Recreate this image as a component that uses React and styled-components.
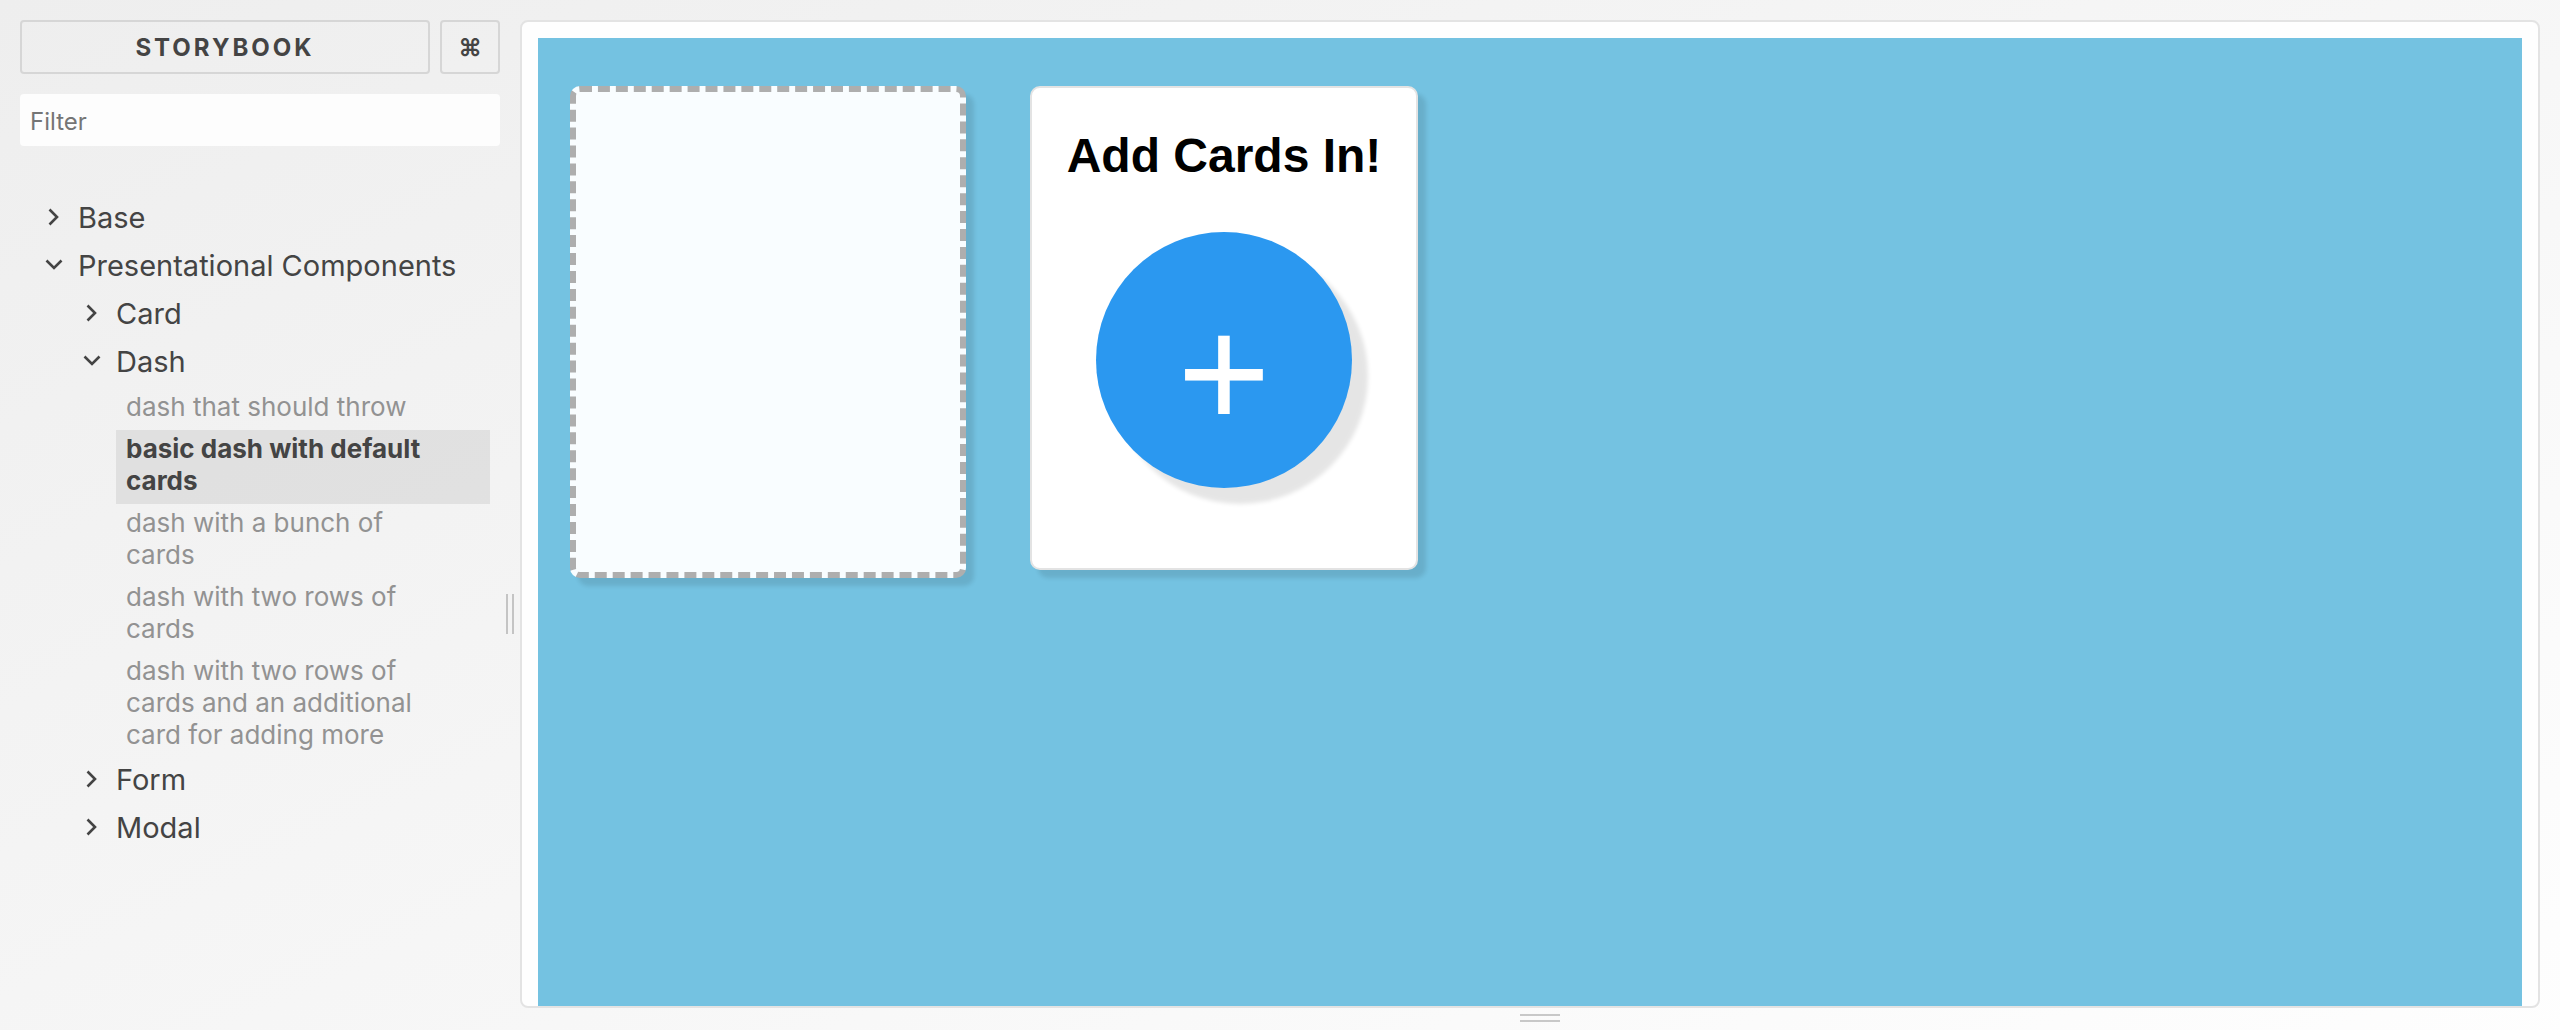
import React, { useState } from "react";
import styled, { createGlobalStyle, css } from "styled-components";

const GlobalStyle = createGlobalStyle`
  *, *::before, *::after { box-sizing: border-box; }
  body { margin: 0; }
`;

const uiFont = css`
  font-family: Inter, "Liberation Sans", sans-serif;
`;

const Page = styled.div`
  ${uiFont}
  display: flex;
  min-height: 100vh;
  color: #444;
  background: linear-gradient(to bottom right, #eee, #fff) 0 0 / 100% 118% no-repeat;
`;

const Sidebar = styled.aside`
  flex: 0 0 500px;
  padding: 20px 0 20px 20px;
`;

const Header = styled.header`
  display: flex;
  gap: 10px;
  margin-bottom: 20px;
`;

const HeaderButton = styled.button`
  ${uiFont}
  flex: ${(p) => (p.$grow ? "1" : "0 0 60px")};
  height: 54px;
  padding: 0;
  border: 2px solid #d6d6d6;
  border-radius: 4px;
  background: transparent;
  color: #444;
  font-size: 24px;
  font-weight: 700;
  letter-spacing: ${(p) => (p.$grow ? "3px" : "normal")};
  text-transform: uppercase;
  cursor: pointer;
`;

const FilterInput = styled.input`
  ${uiFont}
  display: block;
  width: 100%;
  height: 52px;
  padding: 2px 10px 0;
  border: 0;
  border-radius: 4px;
  background: #fdfdfd;
  color: #444;
  font-size: 24px;
  &::placeholder { color: #757575; opacity: 1; }
`;

const Tree = styled.nav`
  padding: 50px 10px 0 20px;
`;

const List = styled.ul`
  margin: 0;
  padding: 0 0 0 ${(p) => p.$indent}px;
  list-style: none;
`;

const NodeButton = styled.button`
  ${uiFont}
  display: flex;
  align-items: center;
  gap: 10px;
  width: 100%;
  height: 48px;
  padding: 0 0 6px;
  border: 0;
  background: transparent;
  color: #444;
  font-size: 29px;
  text-align: left;
  white-space: nowrap;
  cursor: pointer;
`;

const Arrow = styled.svg`
  flex: none;
  width: 28px;
  height: 28px;
  fill: none;
  stroke: currentColor;
  stroke-width: 2.6;
  transform: rotate(${(p) => (p.$open ? 90 : 0)}deg);
`;

const StoryLink = styled.a`
  display: block;
  padding: 3px 56px 7px 10px;
  background: ${(p) => (p.$active ? "rgba(0, 0, 0, 0.07)" : "transparent")};
  color: ${(p) => (p.$active ? "#444" : "#929292")};
  font-size: 26px;
  font-weight: ${(p) => (p.$active ? 700 : 400)};
  line-height: 32px;
  text-decoration: none;
`;

const SideHandle = styled.div`
  flex: 0 0 20px;
  display: flex;
  align-items: center;
  justify-content: center;
  padding-top: 198px;
  cursor: col-resize;
  &::before {
    content: "";
    width: 8px;
    height: 40px;
    border: solid #c4c4c4;
    border-width: 0 2px;
  }
`;

const Main = styled.main`
  flex: 1;
  min-width: 0;
  display: flex;
  flex-direction: column;
  padding-top: 20px;
`;

const Preview = styled.section`
  flex: 1;
  display: flex;
  margin-right: 20px;
  padding: 16px 16px 0;
  border: 2px solid #e3e3e3;
  border-radius: 8px;
  background: #fefefe;
`;

const BottomHandle = styled.div`
  display: flex;
  align-items: center;
  justify-content: center;
  height: 22px;
  padding-bottom: 2px;
  cursor: row-resize;
  &::before {
    content: "";
    width: 40px;
    height: 8px;
    border: solid #c8c8c8;
    border-width: 2px 0;
  }
`;

const Dash = styled.div`
  flex: 1;
  display: flex;
  flex-wrap: wrap;
  align-items: flex-start;
  align-content: flex-start;
  gap: 64px;
  padding: 48px 32px;
  background: #74c2e1;
`;

const CardBase = styled.article`
  border-radius: 10px;
  box-shadow: 8px 8px 4px rgba(0, 0, 0, 0.1);
`;

const EmptyCard = styled(CardBase)`
  width: 396px;
  height: 492px;
  border: 6px dashed #aeaeae;
  background: #f9fdff;
`;

const AddCard = styled(CardBase)`
  display: flex;
  flex-direction: column;
  align-items: center;
  gap: 48px;
  width: 388px;
  height: 484px;
  padding-top: 40px;
  border: 2px solid #e3e3e3;
  background: #fff;
`;

const CardTitle = styled.h2`
  margin: 0;
  color: #000;
  font: 700 48px/56px "Liberation Sans", Arial, sans-serif;
  white-space: nowrap;
`;

const AddButton = styled.button`
  width: 256px;
  height: 256px;
  padding: 26px 0 0;
  border: 0;
  border-radius: 50%;
  background: #2b98f0;
  box-shadow: 16px 16px 4px rgba(0, 0, 0, 0.1);
  color: #fff;
  font: 400 160px/230px "Liberation Sans", Arial, sans-serif;
  cursor: pointer;
`;

const components = [
  { name: "Card", stories: [] },
  {
    name: "Dash",
    stories: [
      "dash that should throw",
      "basic dash with default cards",
      "dash with a bunch of cards",
      "dash with two rows of cards",
      "dash with two rows of cards and an additional card for adding more",
    ],
  },
  { name: "Form", stories: [] },
  { name: "Modal", stories: [] },
];

function TreeNode({ label, defaultOpen = false, indent, children }) {
  const [open, setOpen] = useState(defaultOpen);
  return (
    <li>
      <NodeButton type="button" aria-expanded={open} onClick={() => setOpen(!open)}>
        <Arrow viewBox="0 0 28 28" $open={open} aria-hidden="true">
          <path d="M9.5 6.5L17 14l-7.5 7.5" />
        </Arrow>
        {label}
      </NodeButton>
      {open && children && <List $indent={indent}>{children}</List>}
    </li>
  );
}

export default function App() {
  const [selected, setSelected] = useState("basic dash with default cards");
  const [filter, setFilter] = useState("");

  return (
    <>
      <GlobalStyle />
      <Page>
        <Sidebar>
          <Header>
            <HeaderButton type="button" $grow>Storybook</HeaderButton>
            <HeaderButton type="button" aria-label="Shortcuts">⌘</HeaderButton>
          </Header>
          <FilterInput
            type="text"
            name="filter"
            aria-label="Filter"
            placeholder="Filter"
            value={filter}
            onChange={(e) => setFilter(e.target.value)}
          />
          <Tree aria-label="Stories">
            <List $indent={0}>
              <TreeNode label="Base" />
              <TreeNode label="Presentational Components" defaultOpen indent={38}>
                {components.map(({ name, stories }) => (
                  <TreeNode key={name} label={name} defaultOpen={stories.length > 0} indent={38}>
                    {stories.map((story) => (
                      <li key={story}>
                        <StoryLink
                          href="#"
                          $active={story === selected}
                          onClick={() => setSelected(story)}
                        >
                          {story}
                        </StoryLink>
                      </li>
                    ))}
                  </TreeNode>
                ))}
              </TreeNode>
            </List>
          </Tree>
        </Sidebar>
        <SideHandle />
        <Main>
          <Preview>
            <Dash>
              <EmptyCard />
              <AddCard>
                <CardTitle>Add Cards In!</CardTitle>
                <AddButton type="button" aria-label="Add card">+</AddButton>
              </AddCard>
            </Dash>
          </Preview>
          <BottomHandle />
        </Main>
      </Page>
    </>
  );
}
